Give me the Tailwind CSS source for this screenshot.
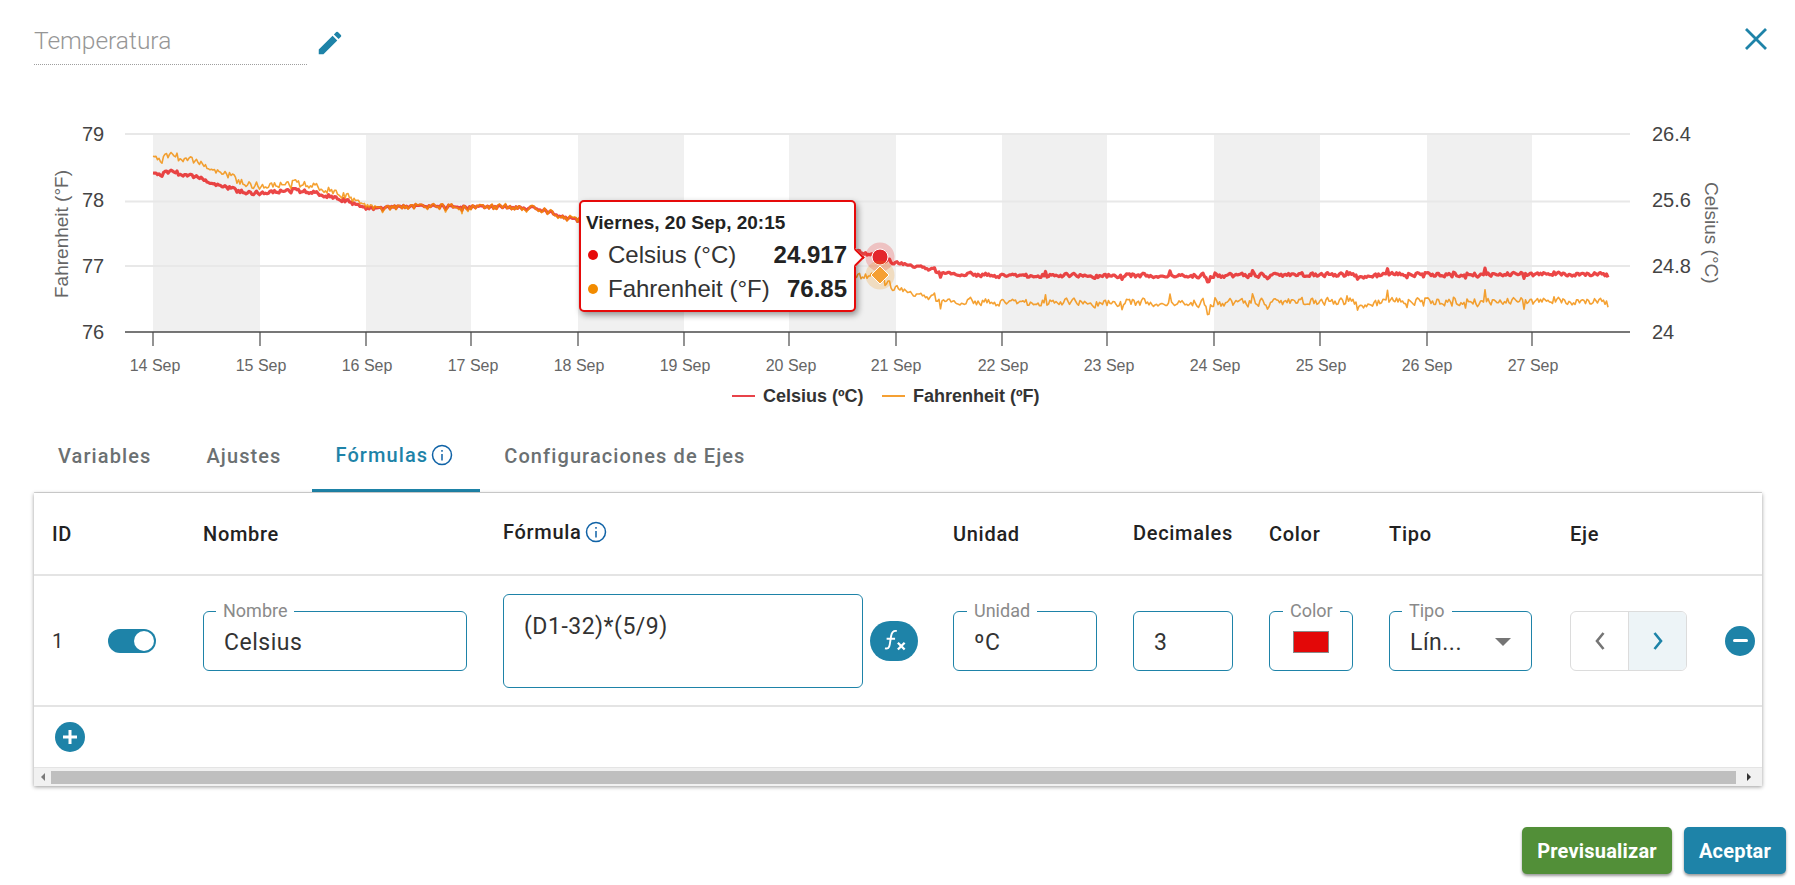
<!doctype html>
<html>
  <head>
    <meta charset="utf-8" />
    <title>Temperatura</title>
    <script src="https://cdn.jsdelivr.net/npm/@tailwindcss/browser@4"></script>
  </head>
  <body class="bg-white font-[Roboto,sans-serif] text-[#212121] overflow-hidden">
    <div class="w-[1795px] h-[885px] flex flex-col">
      <!-- title -->
      <header class="h-[100px] pl-[34px] pr-[27px] flex items-start justify-between shrink-0">
        <div class="flex items-start">
          <div class="w-[273px] h-[65px] pt-[24px] border-b border-dotted border-[#9e9e9e] text-[24.5px] leading-[34px] font-light text-[#969696]">Temperatura</div>
          <svg class="w-[30px] h-[30px] ml-[8px] mt-[28px]" viewBox="0 0 24 24" fill="#1e83a8">
            <path d="M3 17.25V21h3.75L17.81 9.94l-3.75-3.75L3 17.25zM20.71 7.04a1 1 0 0 0 0-1.41l-2.34-2.34a1 1 0 0 0-1.41 0l-1.83 1.83 3.75 3.75 1.83-1.83z" />
          </svg>
        </div>
        <svg class="w-[24px] h-[24px] mt-[27px]" viewBox="0 0 24 24" fill="none" stroke="#1e83a8" stroke-width="2.8">
          <path d="M2 2l20 20M22 2L2 22" />
        </svg>
      </header>

      <!-- chart -->
      <div class="relative h-[320px] shrink-0">
        <svg class="block w-[1795px] h-[320px]" viewBox="0 100 1795 320" font-family="Liberation Sans, Arial, sans-serif">
          <g fill="#f0f0f0">
            <rect x="153" y="134" width="107" height="198" />
            <rect x="366" y="134" width="105" height="198" />
            <rect x="578" y="134" width="106" height="198" />
            <rect x="789" y="134" width="107" height="198" />
            <rect x="1002" y="134" width="105" height="198" />
            <rect x="1214" y="134" width="106" height="198" />
            <rect x="1427" y="134" width="105" height="198" />
          </g>
          <g stroke="#e8e8e8" stroke-width="2">
            <line x1="125" x2="1630" y1="134" y2="134" />
            <line x1="125" x2="1630" y1="201.5" y2="201.5" />
            <line x1="125" x2="1630" y1="266" y2="266" />
          </g>
          <line x1="125" x2="1630" y1="332" y2="332" stroke="#4a4a4a" stroke-width="1.5" />
          <g stroke="#4a4a4a" stroke-width="1.2">
            <line x1="153" x2="153" y1="332" y2="346" />
            <line x1="260" x2="260" y1="332" y2="346" />
            <line x1="366" x2="366" y1="332" y2="346" />
            <line x1="471" x2="471" y1="332" y2="346" />
            <line x1="578" x2="578" y1="332" y2="346" />
            <line x1="684" x2="684" y1="332" y2="346" />
            <line x1="789" x2="789" y1="332" y2="346" />
            <line x1="896" x2="896" y1="332" y2="346" />
            <line x1="1002" x2="1002" y1="332" y2="346" />
            <line x1="1107" x2="1107" y1="332" y2="346" />
            <line x1="1214" x2="1214" y1="332" y2="346" />
            <line x1="1320" x2="1320" y1="332" y2="346" />
            <line x1="1427" x2="1427" y1="332" y2="346" />
            <line x1="1532" x2="1532" y1="332" y2="346" />
          </g>
          <polyline id="serie-c" fill="none" stroke="#e60a0a" stroke-opacity=".75" stroke-width="3.2" stroke-linejoin="round" />
          <polyline id="serie-f" fill="none" stroke="#f28b00" stroke-opacity=".8" stroke-width="1.6" stroke-linejoin="round" />
          <!-- hover markers -->
          <circle cx="880" cy="257" r="14.5" fill="#e60a0a" fill-opacity=".2" />
          <circle cx="880" cy="257" r="8" fill="#e3262c" stroke="#fff" stroke-width="1" />
          <circle cx="880" cy="275" r="14.5" fill="#f28b00" fill-opacity=".2" />
          <path d="M880 266l9 9-9 9-9-9z" fill="#f5a033" stroke="#fff" stroke-width="1" />
          <!-- axis labels -->
          <g font-size="20" fill="#444">
            <text x="82" y="141">79</text>
            <text x="82" y="207">78</text>
            <text x="82" y="273">77</text>
            <text x="82" y="339">76</text>
            <text x="1652" y="141">26.4</text>
            <text x="1652" y="207">25.6</text>
            <text x="1652" y="273">24.8</text>
            <text x="1652" y="339">24</text>
          </g>
          <g font-size="19" fill="#666">
            <text transform="translate(68 298) rotate(-90)">Fahrenheit (°F)</text>
            <text transform="translate(1705 182) rotate(90)">Celsius (°C)</text>
          </g>
          <g font-size="16" fill="#666" text-anchor="middle">
            <text x="155" y="371">14 Sep</text>
            <text x="261" y="371">15 Sep</text>
            <text x="367" y="371">16 Sep</text>
            <text x="473" y="371">17 Sep</text>
            <text x="579" y="371">18 Sep</text>
            <text x="685" y="371">19 Sep</text>
            <text x="791" y="371">20 Sep</text>
            <text x="896" y="371">21 Sep</text>
            <text x="1003" y="371">22 Sep</text>
            <text x="1109" y="371">23 Sep</text>
            <text x="1215" y="371">24 Sep</text>
            <text x="1321" y="371">25 Sep</text>
            <text x="1427" y="371">26 Sep</text>
            <text x="1533" y="371">27 Sep</text>
          </g>
          <line x1="732" x2="755" y1="396" y2="396" stroke="#e8434a" stroke-width="2" />
          <text x="763" y="402" font-size="18" font-weight="700" fill="#333">Celsius (ºC)</text>
          <line x1="882" x2="905" y1="396" y2="396" stroke="#f5a033" stroke-width="2" />
          <text x="913" y="402" font-size="18" font-weight="700" fill="#333">Fahrenheit (ºF)</text>
        </svg>

        <!-- tooltip -->
        <div class="absolute left-[579px] top-[100px] w-[277px] h-[112px] bg-white border-2 border-[#e60a0a] rounded-[5px] shadow-[2px_3px_6px_rgba(0,0,0,0.4)] font-['Liberation_Sans',Arial,sans-serif] text-[#333]">
          <div class="absolute right-[-8px] top-[49px] w-[13px] h-[13px] rotate-45 bg-white border-t-2 border-r-2 border-[#e60a0a]"></div>
          <div class="relative px-[5px] pt-[11px]">
            <div class="text-[19px] leading-[20px] font-bold text-[#222] whitespace-nowrap">Viernes, 20 Sep, 20:15</div>
            <div class="flex items-center mt-[5px] h-[34px]">
              <span class="w-[10px] h-[10px] rounded-full bg-[#e60a0a] mr-[10px] ml-[2px]"></span>
              <span class="text-[24px]">Celsius (°C)</span>
              <span class="ml-auto pr-[2px] text-[24px] font-bold text-[#222]">24.917</span>
            </div>
            <div class="flex items-center h-[34px]">
              <span class="w-[10px] h-[10px] rounded-full bg-[#f28b00] mr-[10px] ml-[2px]"></span>
              <span class="text-[24px]">Fahrenheit (°F)</span>
              <span class="ml-auto pr-[2px] text-[24px] font-bold text-[#222]">76.85</span>
            </div>
          </div>
        </div>
      </div>

      <!-- tabs -->
      <nav class="h-[73px] mx-[34px] w-[1728px] border-b border-[#dcdcdc] flex shrink-0 text-[20px] font-medium tracking-[1.1px] text-[#6b7072]">
        <a class="h-[72px] px-[24px] flex items-center">Variables</a>
        <a class="h-[72px] px-[24px] ml-[7px] flex items-center">Ajustes</a>
        <a class="h-[72px] pl-[24px] pr-[27px] ml-[6px] flex items-center text-[#1e83a8] border-b-[3px] border-[#1e83a8] gap-[3px]">
          Fórmulas
          <svg class="w-[22px] h-[22px]" viewBox="0 0 22 22" fill="none" stroke="#0f62a6" stroke-width="1.5">
            <circle cx="11" cy="11" r="9.5" />
            <path d="M11 10v6.5M11 6v1.8" />
          </svg>
        </a>
        <a class="h-[72px] px-[24px] flex items-center">Configuraciones de Ejes</a>
      </nav>

      <!-- table card -->
      <section class="ml-[34px] w-[1728px] h-[293px] shrink-0 shadow-[0_1px_4px_rgba(0,0,0,0.4)] flex flex-col">
        <div class="h-[83px] border-b-2 border-[#e4e4e4] grid grid-cols-[151px_300px_450px_180px_136px_120px_181px_151px_59px] items-center text-[20px] font-medium tracking-[0.7px] text-[#222]">
          <div class="pl-[18px]">ID</div>
          <div class="pl-[18px]">Nombre</div>
          <div class="pl-[18px] pb-[4px] flex items-center gap-[3px]">
            Fórmula
            <svg class="w-[22px] h-[22px]" viewBox="0 0 22 22" fill="none" stroke="#0f62a6" stroke-width="1.5">
              <circle cx="11" cy="11" r="9.5" />
              <path d="M11 10v6.5M11 6v1.8" />
            </svg>
          </div>
          <div class="pl-[18px]">Unidad</div>
          <div class="pl-[18px] pb-[2px]">Decimales</div>
          <div class="pl-[18px]">Color</div>
          <div class="pl-[18px]">Tipo</div>
          <div class="pl-[18px]">Eje</div>
          <div></div>
        </div>

        <div class="h-[131px] border-b-2 border-[#e4e4e4] grid grid-cols-[151px_300px_450px_180px_136px_120px_181px_151px_59px] items-center text-[23px] tracking-[0.5px] text-[#333]">
          <div class="pl-[18px] flex items-center">
            <span class="text-[20px] w-[56px]">1</span>
            <span class="w-[48px] h-[24px] rounded-full bg-[#1e83a8] relative">
              <span class="absolute right-[2px] top-[2px] w-[20px] h-[20px] rounded-full bg-white"></span>
            </span>
          </div>
          <div class="pl-[18px]">
            <div class="relative w-[264px] h-[60px] border border-[#1e83a8] rounded-[6px] pl-[20px] pt-[5px] flex items-center">
              <span class="absolute left-[12px] top-[-11px] px-[7px] bg-white text-[18px] leading-[20px] text-[#8a8a8a] tracking-normal">Nombre</span>
              Celsius
            </div>
          </div>
          <div class="pl-[18px] flex items-center">
            <div class="w-[360px] h-[94px] border border-[#1e83a8] rounded-[6px] pl-[20px] pt-[17px] leading-[30px]">(D1-32)*(5/9)</div>
            <button class="ml-[7px] w-[48px] h-[40px] rounded-full bg-[#1e83a8] flex items-center justify-center">
              <svg class="w-[27px] h-[27px]" viewBox="0 0 24 24" fill="none" stroke="#fff" stroke-width="1.7">
                <path d="M14 3.5C11 3 9.5 5 9 8L7.8 15.5C7.4 18.5 6 19.5 3.5 19M5 10.5H12.5" />
                <path d="M15 14l6 6M21 14l-6 6" stroke-width="2.1" />
              </svg>
            </button>
          </div>
          <div class="pl-[18px]">
            <div class="relative w-[144px] h-[60px] border border-[#1e83a8] rounded-[6px] pl-[20px] pt-[5px] flex items-center">
              <span class="absolute left-[13px] top-[-11px] px-[7px] bg-white text-[18px] leading-[20px] text-[#8a8a8a] tracking-normal">Unidad</span>
              ºC
            </div>
          </div>
          <div class="pl-[18px]">
            <div class="w-[100px] h-[60px] border border-[#1e83a8] rounded-[6px] pl-[20px] pt-[5px] flex items-center">3</div>
          </div>
          <div class="pl-[18px]">
            <div class="relative w-[84px] h-[60px] border border-[#1e83a8] rounded-[6px] flex items-center justify-center">
              <span class="absolute left-[13px] top-[-11px] px-[7px] bg-white text-[18px] leading-[20px] text-[#8a8a8a] tracking-normal">Color</span>
              <span class="w-[36px] h-[22px] bg-[#e30808] border border-[#8a8a8a] mt-[2px]"></span>
            </div>
          </div>
          <div class="pl-[18px]">
            <div class="relative w-[143px] h-[60px] border border-[#1e83a8] rounded-[6px] pl-[20px] pt-[5px] flex items-center">
              <span class="absolute left-[12px] top-[-11px] px-[7px] bg-white text-[18px] leading-[20px] text-[#8a8a8a] tracking-normal">Tipo</span>
              Lín...
              <span class="absolute right-[20px] top-[26px] w-0 h-0 border-x-[8px] border-x-transparent border-t-[8px] border-t-[#757575]"></span>
            </div>
          </div>
          <div class="pl-[18px]">
            <div class="w-[117px] h-[60px] border border-[#dcdcdc] rounded-[6px] flex overflow-hidden">
              <span class="w-[57px] flex items-center justify-center">
                <svg class="w-[14px] h-[20px]" viewBox="0 0 14 20" fill="none" stroke="#757575" stroke-width="2.6"><path d="M10.5 2L4 10l6.5 8" /></svg>
              </span>
              <span class="flex-1 bg-[#edf4f7] border-l border-[#dcdcdc] flex items-center justify-center">
                <svg class="w-[14px] h-[20px]" viewBox="0 0 14 20" fill="none" stroke="#1e83a8" stroke-width="2.6"><path d="M3.5 2L10 10l-6.5 8" /></svg>
              </span>
            </div>
          </div>
          <div class="pl-[22px]">
            <span class="w-[30px] h-[30px] rounded-full bg-[#1e83a8] flex items-center justify-center">
              <span class="w-[15px] h-[3px] rounded-full bg-white"></span>
            </span>
          </div>
        </div>

        <div class="h-[61px] pl-[21px] flex items-center border-b border-[#e4e4e4]">
          <svg class="w-[30px] h-[30px]" viewBox="0 0 30 30"><circle cx="15" cy="15" r="15" fill="#1e83a8" /><path d="M15 8v14M8 15h14" stroke="#fff" stroke-width="3" /></svg>
        </div>

        <div class="flex-1 bg-[#f1f1f1] flex items-center">
          <span class="w-[17px] flex justify-center"><span class="w-0 h-0 border-y-[4px] border-y-transparent border-r-[4px] border-r-[#7a7a7a]"></span></span>
          <span class="flex-1 h-[13px] bg-[#bfbfbf]"></span>
          <span class="w-[26px] flex justify-center"><span class="w-0 h-0 border-y-[4px] border-y-transparent border-l-[4px] border-l-[#333]"></span></span>
        </div>
      </section>

      <!-- actions -->
      <footer class="flex justify-end gap-[12px] pr-[9px] mt-[41px]">
        <button class="w-[150px] h-[47px] rounded-[5px] bg-[#528f38] text-white text-[20px] font-bold tracking-[0.2px] shadow-[0_2px_3px_rgba(0,0,0,0.4)]">Previsualizar</button>
        <button class="w-[102px] h-[47px] rounded-[5px] bg-[#1e83a8] text-white text-[20px] font-bold tracking-[0.2px] shadow-[0_2px_3px_rgba(0,0,0,0.4)]">Aceptar</button>
      </footer>
    </div>

    <script>
      // fake sensor noise, seeded so each render is the same
      let seed = 1234;
      const rnd = () => {
        seed = (seed * 16807) % 2147483647;
        return seed / 2147483647;
      };

      const redKeys = [[153,175],[172,172],[191,175],[210,183],[230,189],[249,193],[268,192],[291,190],[318,193],[344,200],[367,209],[383,207],[421,206],[497,207],[536,208],[574,220],[600,228],[856,252],[880,257],[896,263],[907,265],[940,272],[1000,276],[1608,274]];
      const orangeKeys = [[153,160],[172,156],[191,158],[200,165],[230,177],[249,185],[268,185],[291,183],[318,186],[344,195],[367,207],[383,207],[421,206],[497,207],[536,208],[574,220],[600,230],[856,278],[880,275],[893,287],[923,298],[1000,303],[1608,301]];

      const lerp = (keys, x) => {
        for (let i = 1; i < keys.length; i++) {
          if (x <= keys[i][0]) {
            const [x0, y0] = keys[i - 1];
            const [x1, y1] = keys[i];
            return y0 + ((y1 - y0) * (x - x0)) / (x1 - x0);
          }
        }
        return keys[keys.length - 1][1];
      };

      let red = "";
      let orange = "";
      let slow = 0;
      for (let x = 153; x <= 1608; x += 1.5) {
        slow = slow * 0.35 + (rnd() - 0.5) * 5;
        let n = slow;
        if (rnd() > 0.9) n += (rnd() - 0.5) * 12;
        red += x + "," + (lerp(redKeys, x) + n * 0.8).toFixed(1) + " ";
        orange += x + "," + (lerp(orangeKeys, x) + n * 1.5).toFixed(1) + " ";
      }
      document.getElementById("serie-c").setAttribute("points", red);
      document.getElementById("serie-f").setAttribute("points", orange);
    </script>
  </body>
</html>
